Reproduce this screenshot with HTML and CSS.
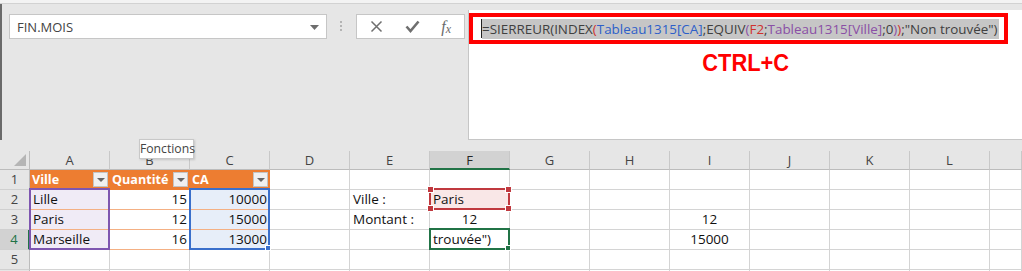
FILE: index.html
```html
<!DOCTYPE html>
<html lang="fr">
<head>
<meta charset="utf-8">
<title>Excel</title>
<link rel="stylesheet" href="styles.css">
</head>
<body>
<div class="app">
  <div class="topstrip"></div>
  <div class="fbar">
    <div class="fleft">
      <div class="namebox">
        <span>FIN.MOIS</span>
        <svg class="caret" width="9" height="5" viewBox="0 0 9 5"><path d="M0 0h9L4.5 5z" fill="#6d6d6d"/></svg>
      </div>
      <div class="dots"><i></i><i></i><i></i></div>
      <div class="btns">
        <svg width="13" height="13" viewBox="0 0 13 13"><path d="M1.5 1.5l10 10M11.5 1.5l-10 10" stroke="#6f6f6f" stroke-width="1.5" fill="none"/></svg>
        <svg width="15" height="13" viewBox="0 0 15 13"><path d="M1.5 6.5l4 4.5 8-9.5" stroke="#6f6f6f" stroke-width="2.6" fill="none"/></svg>
        <span class="fx">f<sub>x</sub></span>
      </div>
    </div>
    <div class="fpanel">
      <div class="annot">
        <div class="formula"><span class="cursor"></span><span class="sel">=SIERREUR(INDEX<span class="k-red">(</span><span class="k-blue">Tableau1315[CA]</span>;EQUIV<span class="k-purple">(</span><span class="k-red">F2</span>;<span class="k-purple">Tableau1315[Ville]</span>;0<span class="k-purple">)</span><span class="k-red">)</span>;"Non trouvée")</span></div>
      </div>
      <div class="ctrlc">CTRL+C</div>
    </div>
  </div>

  <div class="sheet">
    <div class="row hdr">
      <div class="corner"><span class="tri"></span></div>
      <div class="ch">A</div><div class="ch">B</div><div class="ch">C</div><div class="ch">D</div>
      <div class="ch">E</div><div class="ch active">F</div><div class="ch">G</div><div class="ch">H</div>
      <div class="ch">I</div><div class="ch">J</div><div class="ch">K</div><div class="ch">L</div><div class="ch last"></div>
    </div>
    <div class="row">
      <div class="rh">1</div>
      <div class="c th">Ville<span class="dd"></span></div>
      <div class="c th">Quantité<span class="dd"></span></div>
      <div class="c th">CA<span class="dd"></span></div>
      <div class="c"></div><div class="c"></div><div class="c"></div><div class="c"></div><div class="c"></div>
      <div class="c"></div><div class="c"></div><div class="c"></div><div class="c"></div><div class="c last"></div>
    </div>
    <div class="row">
      <div class="rh">2</div>
      <div class="c tb purple">Lille</div>
      <div class="c tb num">15</div>
      <div class="c tb blue num">10000</div>
      <div class="c"></div>
      <div class="c">Ville :</div>
      <div class="c pink">Paris</div>
      <div class="c"></div><div class="c"></div><div class="c"></div><div class="c"></div><div class="c"></div><div class="c"></div><div class="c last"></div>
    </div>
    <div class="row">
      <div class="rh">3</div>
      <div class="c tb purple">Paris</div>
      <div class="c tb num">12</div>
      <div class="c tb blue num">15000</div>
      <div class="c"></div>
      <div class="c">Montant :</div>
      <div class="c mid">12</div>
      <div class="c"></div><div class="c"></div>
      <div class="c mid">12</div>
      <div class="c"></div><div class="c"></div><div class="c"></div><div class="c last"></div>
    </div>
    <div class="row">
      <div class="rh active">4</div>
      <div class="c tb purple">Marseille</div>
      <div class="c tb num">16</div>
      <div class="c tb blue num">13000</div>
      <div class="c"></div>
      <div class="c"></div>
      <div class="c">trouvée")</div>
      <div class="c"></div><div class="c"></div>
      <div class="c mid">15000</div>
      <div class="c"></div><div class="c"></div><div class="c"></div><div class="c last"></div>
    </div>
    <div class="row">
      <div class="rh">5</div>
      <div class="c"></div><div class="c"></div><div class="c"></div><div class="c"></div><div class="c"></div><div class="c"></div>
      <div class="c"></div><div class="c"></div><div class="c"></div><div class="c"></div><div class="c"></div><div class="c"></div><div class="c last"></div>
    </div>
    <div class="row">
      <div class="rh"></div>
      <div class="c"></div><div class="c"></div><div class="c"></div><div class="c"></div><div class="c"></div><div class="c"></div>
      <div class="c"></div><div class="c"></div><div class="c"></div><div class="c"></div><div class="c"></div><div class="c"></div><div class="c last"></div>
    </div>

    <div class="box box-purple"></div>
    <div class="box box-blue"><span class="handle-blue"></span></div>
    <div class="box box-red"><i class="h tl"></i><i class="h tr"></i><i class="h bl"></i><i class="h br"></i></div>
    <div class="box box-green"><span class="handle-green"></span></div>
    <div class="tooltip">Fonctions</div>
  </div>
</div>
</body>
</html>
```

FILE: styles.css
```css
html, body {
  margin: 0;
  padding: 0;
}
body {
  width: 1022px;
  height: 271px;
  overflow: hidden;
  background: #e6e6e6;
  font-family: "Open Sans", "Noto Sans", sans-serif;
  color: #262626;
}
.app {
  position: relative;
  width: 1022px;
  height: 271px;
  overflow: hidden;
}
.topstrip {
  height: 3px;
  background: #f3f3f3;
  border-bottom: 1px solid #d2d2d2;
}
.fbar {
  display: flex;
  height: 136px;
  border-left: 2px solid #6a6a6a;
  box-sizing: border-box;
}
.fleft {
  width: 466px;
  flex: none;
  display: flex;
  align-items: flex-start;
  padding: 10px 0 0 7px;
  box-sizing: border-box;
}
.namebox {
  width: 318px;
  height: 25px;
  box-sizing: border-box;
  background: #fff;
  border: 1px solid #c6c6c6;
  display: flex;
  align-items: center;
  justify-content: space-between;
  padding: 0 7px 0 7px;
  font-size: 13px;
  color: #444;
}
.caret { margin-top: 1px; }
.dots {
  width: 3px;
  margin: 7px 0 0 13px;
  display: flex;
  flex-direction: column;
  gap: 2px;
}
.dots i {
  display: block;
  width: 2px;
  height: 2px;
  background: #b4b4b4;
}
.btns {
  margin-left: 13px;
  width: 109px;
  height: 25px;
  box-sizing: border-box;
  background: #fff;
  border: 1px solid #c6c6c6;
  display: flex;
  align-items: center;
  justify-content: space-between;
  padding: 0 13px 0 13px;
}
.fx {
  font-family: "Liberation Serif", serif;
  font-style: italic;
  font-size: 16px;
  color: #6a6a6a;
  line-height: 1;
}
.fx sub {
  font-size: 12px;
  vertical-align: -1px;
}
.fpanel {
  flex: 1;
  min-width: 0;
  margin-top: 6px;
  background: #fff;
  border-left: 1px solid #c6c6c6;
  border-bottom: 1px solid #c6c6c6;
  display: flex;
  flex-direction: column;
  align-items: flex-start;
}
.annot {
  flex: none;
  margin: 3px 0 0 0;
  width: 539px;
  max-width: 539px;
  height: 31px;
  box-sizing: border-box;
  border: 4px solid #ff0000;
  display: flex;
  align-items: center;
  padding-left: 8px;
  overflow: hidden;
}
.formula {
  display: flex;
  align-items: center;
  font-size: 13.4px;
  color: #404040;
  white-space: nowrap;
}
.cursor {
  display: block;
  width: 1px;
  height: 19px;
  background: #222;
}
.sel {
  background: #c6c6c6;
  line-height: 20px;
  padding-right: 2px;
}
.k-red { color: #d0312d; }
.k-blue { color: #2d5fc9; }
.k-purple { color: #8a4fa5; }
.ctrlc {
  align-self: center;
  margin-top: 6px;
  font-family: "Liberation Sans", Arial, sans-serif;
  font-weight: bold;
  font-size: 23px;
  color: #ff0000;
  transform: scaleX(0.95);
}

/* sheet */
.sheet {
  position: relative;
  margin-top: 11px;
  font-size: 13.5px;
}
.row {
  display: flex;
  height: 20px;
}
.row.hdr { height: 19px; }
.corner, .rh {
  width: 30px;
  flex: none;
  box-sizing: border-box;
  background: #e6e6e6;
  border-right: 1px solid #bcbcbc;
  border-bottom: 1px solid #d0d0d0;
}
.corner {
  position: relative;
  border-bottom-color: #bcbcbc;
}
.tri {
  position: absolute;
  right: 3px;
  bottom: 3px;
  width: 0;
  height: 0;
  border-left: 12px solid transparent;
  border-bottom: 12px solid #b5b5b5;
}
.rh {
  text-align: center;
  font-size: 13px;
  line-height: 19px;
  color: #444;
}
.rh.active {
  background: #d2d2d2;
  color: #217346;
  border-right: 2px solid #217346;
}
.ch {
  width: 80px;
  flex: none;
  box-sizing: border-box;
  background: #e6e6e6;
  border-right: 1px solid #c8c8c8;
  border-bottom: 1px solid #bcbcbc;
  text-align: center;
  font-size: 13px;
  line-height: 18px;
  color: #444;
}
.ch.active {
  background: #d2d2d2;
  border-bottom: 2px solid #217346;
  color: #262626;
}
.ch.last, .c.last {
  flex: 1;
  width: auto;
}
.c {
  width: 80px;
  flex: none;
  box-sizing: border-box;
  border-right: 1px solid #d4d4d4;
  border-bottom: 1px solid #d4d4d4;
  background: #fff;
  line-height: 19px;
  padding: 0 3px;
  white-space: nowrap;
  overflow: hidden;
  color: #111;
}
.c.num { text-align: right; padding-right: 2px; }
.c.mid { text-align: center; }
.c.th {
  position: relative;
  background: #ed7d31;
  border-right-color: #ed7d31;
  border-bottom-color: #ed7d31;
  color: #fff;
  font-weight: bold;
  font-size: 12.6px;
  padding-left: 2px;
}
.dd {
  position: absolute;
  right: 1px;
  top: 2px;
  width: 15px;
  height: 15px;
  box-sizing: border-box;
  background: #f0f0f0;
  border: 1px solid #c4c4c4;
}
.dd::after {
  content: "";
  position: absolute;
  left: 3px;
  top: 5px;
  border-left: 4px solid transparent;
  border-right: 4px solid transparent;
  border-top: 4px solid #666;
}
.c.tb { border-bottom-color: #f4b084; }
.c.purple { background: #f0ebf6; }
.c.blue { background: #e7eef9; }
.c.pink { background: #f9e7e7; }

/* overlays */
.box {
  position: absolute;
  box-sizing: border-box;
  border: 2px solid;
  pointer-events: none;
}
.box-purple {
  left: 29px; top: 37px; width: 81px; height: 62px;
  border-color: #7e56b0;
}
.box-blue {
  left: 189px; top: 37px; width: 81px; height: 62px;
  border-color: #3a6fcb;
}
.handle-blue {
  position: absolute;
  right: -3px;
  bottom: -3px;
  width: 4px;
  height: 4px;
  background: #3a6fcb;
  border: 1px solid #fff;
}
.box-red {
  left: 429px; top: 37px; width: 81px; height: 22px;
  border-color: #c0393f;
}
.h {
  position: absolute;
  width: 5px;
  height: 5px;
  background: #c0393f;
  border: 1px solid #fff;
}
.h.tl { left: -4px; top: -4px; }
.h.tr { right: -4px; top: -4px; }
.h.bl { left: -4px; bottom: -4px; }
.h.br { right: -4px; bottom: -4px; }
.box-green {
  left: 429px; top: 77px; width: 81px; height: 22px;
  border-color: #217346;
}
.handle-green {
  position: absolute;
  right: -3px;
  bottom: -3px;
  width: 4px;
  height: 4px;
  background: #217346;
  border: 1px solid #fff;
}
.tooltip {
  position: absolute;
  left: 139px;
  top: -12px;
  width: 55px;
  height: 20px;
  box-sizing: border-box;
  background: #fff;
  border: 1px solid #c8c8c8;
  font-size: 12.2px;
  line-height: 18px;
  text-align: center;
  color: #444;
  box-shadow: 1px 1px 2px rgba(0,0,0,0.15);
  white-space: nowrap;
}
```
